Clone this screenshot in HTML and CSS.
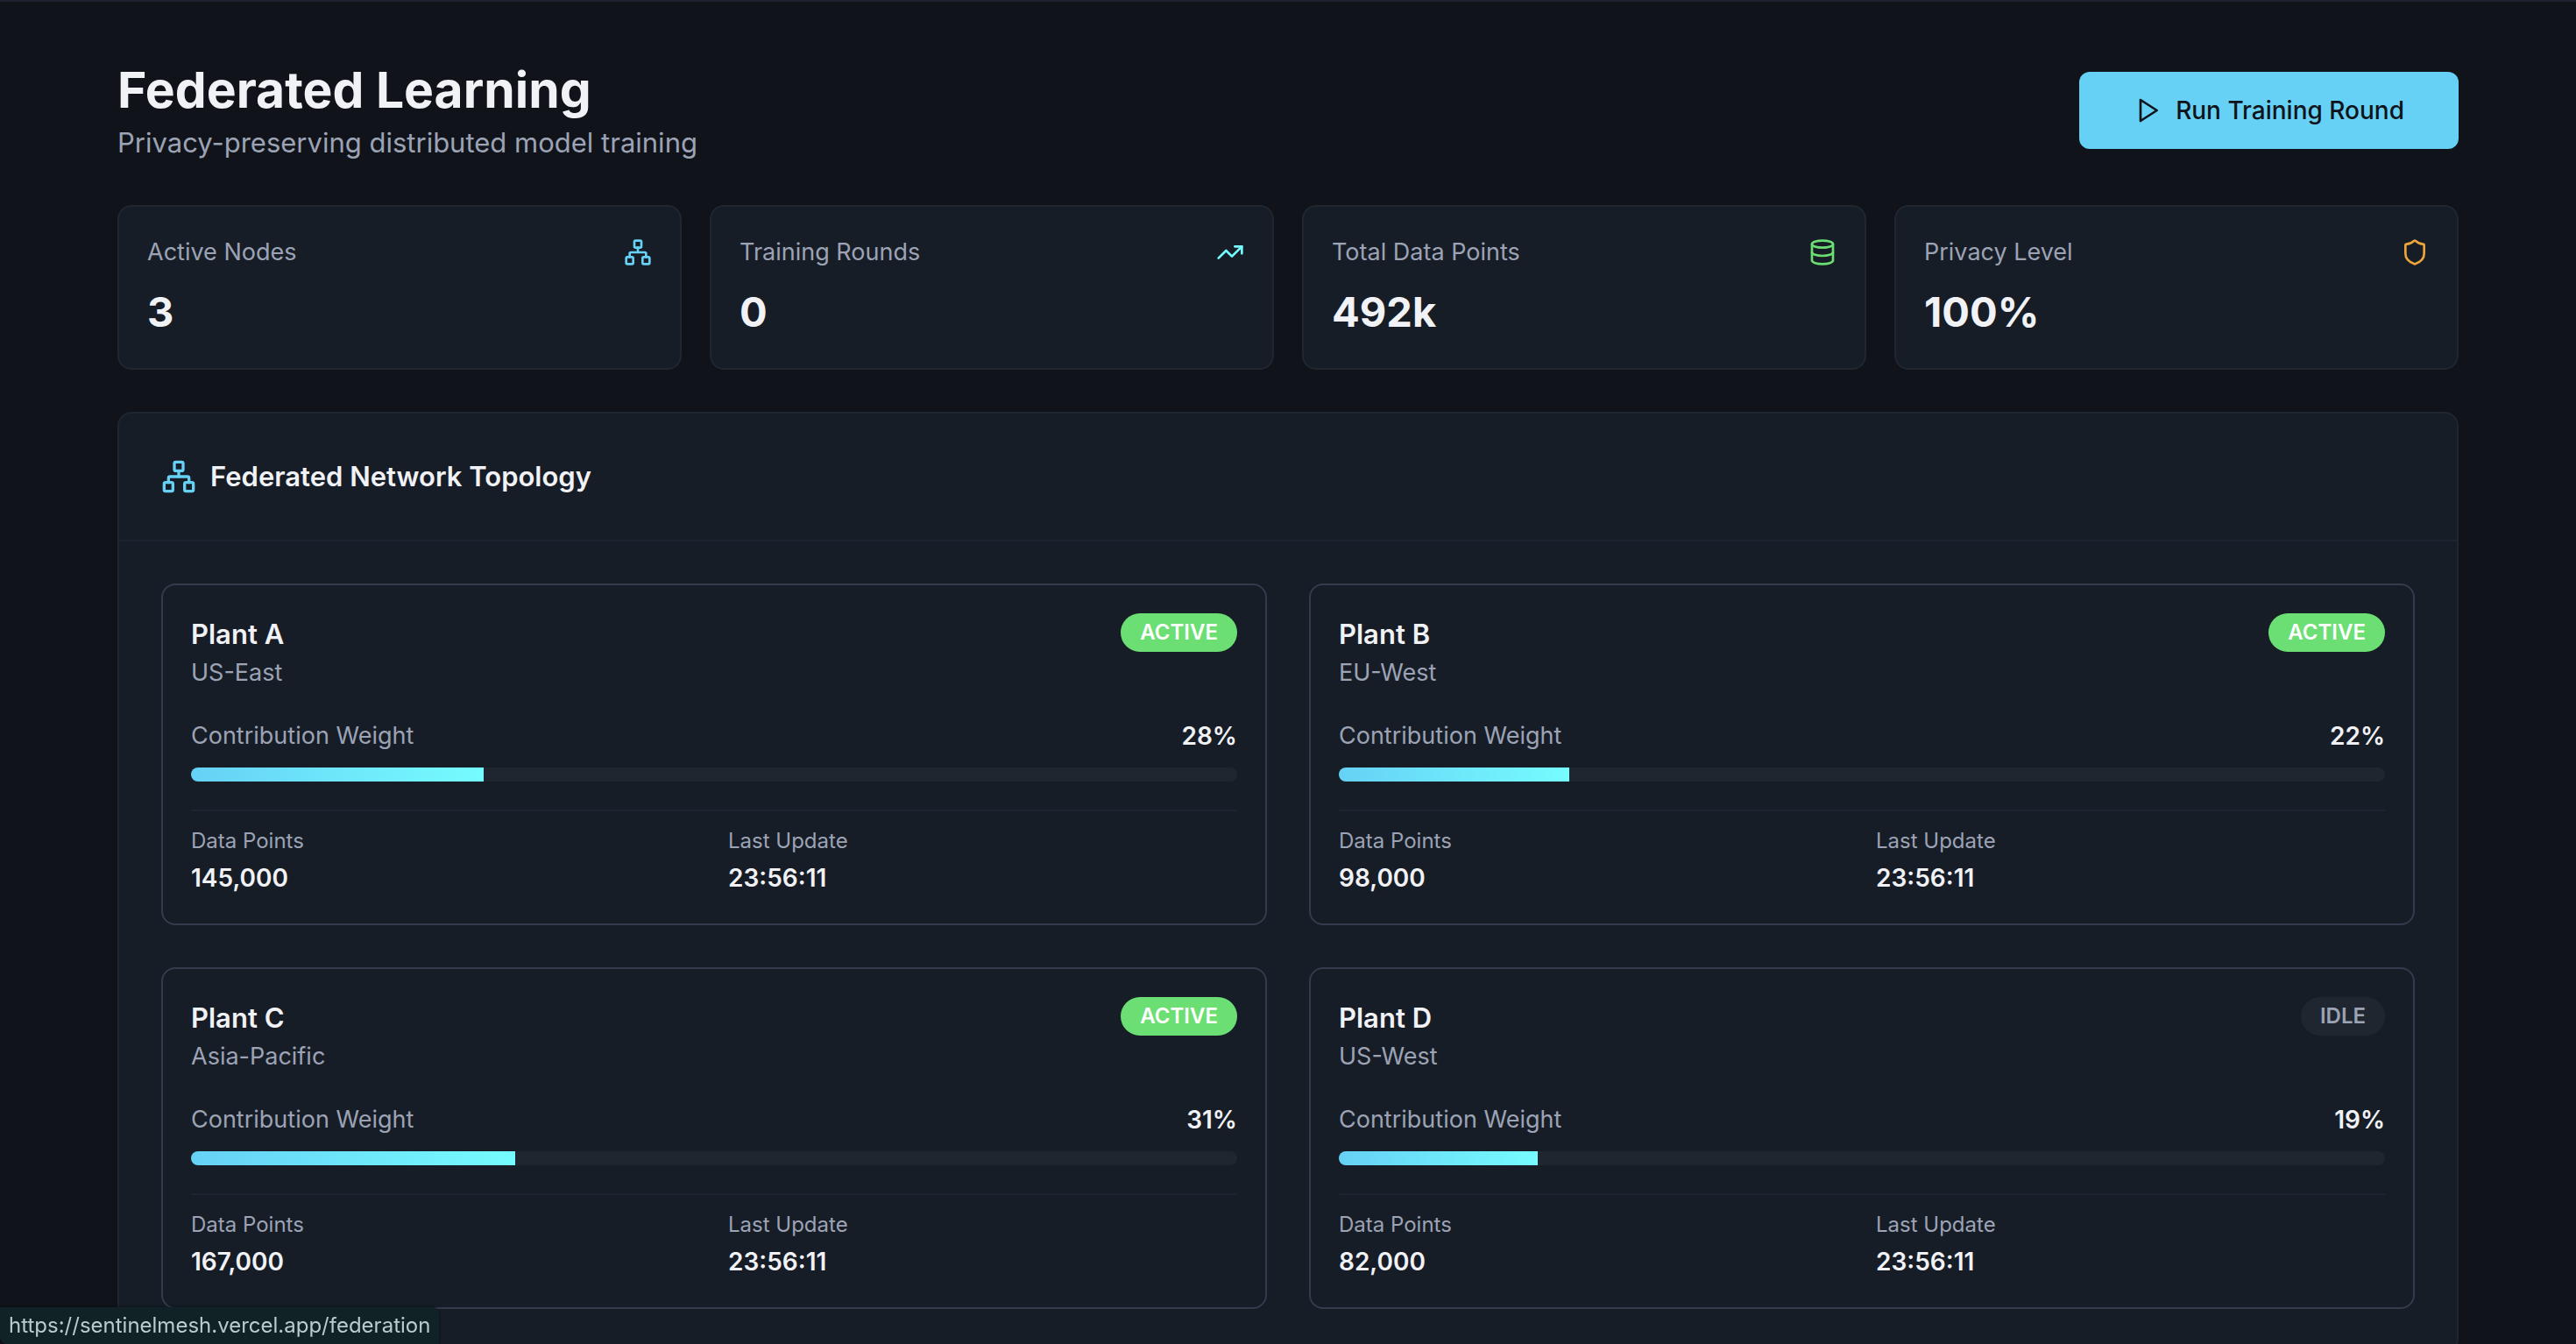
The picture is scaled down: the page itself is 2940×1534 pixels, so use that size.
FILE: index.html
```html
<!DOCTYPE html>
<html lang="en">
<head>
  <meta charset="UTF-8" />
  <meta name="viewport" content="width=device-width, initial-scale=1.0"/>
  <title>Federated Learning - SentinelMesh</title>
  <link rel="stylesheet" href="styles.css">
</head>
<body>

  <svg class="sprite" aria-hidden="true">
    <symbol id="network" viewBox="0 0 24 24">
      <rect x="16" y="16" width="6" height="6" rx="1"/>
      <rect x="2" y="16" width="6" height="6" rx="1"/>
      <rect x="9" y="2" width="6" height="6" rx="1"/>
      <path d="M5 16v-3a1 1 0 0 1 1-1h12a1 1 0 0 1 1 1v3"/>
      <path d="M12 12V8"/>
    </symbol>
  </svg>

  <main class="container">
    <header class="page-header">
      <div>
        <h1>Federated Learning</h1>
        <p class="subtitle">Privacy-preserving distributed model training</p>
      </div>
      <button type="button" class="run-btn">
        <svg class="icon" viewBox="0 0 24 24"><polygon points="6 3 20 12 6 21 6 3"/></svg>
        Run Training Round
      </button>
    </header>

    <section class="stats">
      <div class="card stat">
        <div class="stat-head">
          <span>Active Nodes</span>
          <svg class="icon blue"><use href="#network"/></svg>
        </div>
        <div class="stat-value">3</div>
      </div>
      <div class="card stat">
        <div class="stat-head">
          <span>Training Rounds</span>
          <svg class="icon cyan" viewBox="0 0 24 24"><polyline points="22 7 13.5 15.5 8.5 10.5 2 17"/><polyline points="16 7 22 7 22 13"/></svg>
        </div>
        <div class="stat-value">0</div>
      </div>
      <div class="card stat">
        <div class="stat-head">
          <span>Total Data Points</span>
          <svg class="icon green" viewBox="0 0 24 24"><ellipse cx="12" cy="5" rx="9" ry="3"/><path d="M3 5v14a9 3 0 0 0 18 0V5"/><path d="M3 12a9 3 0 0 0 18 0"/></svg>
        </div>
        <div class="stat-value">492k</div>
      </div>
      <div class="card stat">
        <div class="stat-head">
          <span>Privacy Level</span>
          <svg class="icon orange" viewBox="0 0 24 24"><path d="M20 13c0 5-3.500 7.500-7.660 8.950a1 1 0 0 1-.67-.01C7.500 20.500 4 18 4 13V6a1 1 0 0 1 1-1c2 0 4.500-1.200 6.240-2.720a1.170 1.170 0 0 1 1.520 0C14.510 3.810 17 5 19 5a1 1 0 0 1 1 1z"/></svg>
        </div>
        <div class="stat-value">100%</div>
      </div>
    </section>

    <section class="card panel">
      <div class="panel-head">
        <svg class="icon icon-lg blue"><use href="#network"/></svg>
        <h2>Federated Network Topology</h2>
      </div>

      <div class="nodes">
        <article class="node">
          <div class="node-head">
            <div>
              <h3>Plant A</h3>
              <p class="region">US-East</p>
            </div>
            <span class="badge active">ACTIVE</span>
          </div>
          <div class="weight"><span>Contribution Weight</span><strong>28%</strong></div>
          <div class="track"><div class="fill" style="width: 28%"></div></div>
          <dl class="details">
            <div><dt>Data Points</dt><dd>145,000</dd></div>
            <div><dt>Last Update</dt><dd>23:56:11</dd></div>
          </dl>
        </article>

        <article class="node">
          <div class="node-head">
            <div>
              <h3>Plant B</h3>
              <p class="region">EU-West</p>
            </div>
            <span class="badge active">ACTIVE</span>
          </div>
          <div class="weight"><span>Contribution Weight</span><strong>22%</strong></div>
          <div class="track"><div class="fill" style="width: 22%"></div></div>
          <dl class="details">
            <div><dt>Data Points</dt><dd>98,000</dd></div>
            <div><dt>Last Update</dt><dd>23:56:11</dd></div>
          </dl>
        </article>

        <article class="node">
          <div class="node-head">
            <div>
              <h3>Plant C</h3>
              <p class="region">Asia-Pacific</p>
            </div>
            <span class="badge active">ACTIVE</span>
          </div>
          <div class="weight"><span>Contribution Weight</span><strong>31%</strong></div>
          <div class="track"><div class="fill" style="width: 31%"></div></div>
          <dl class="details">
            <div><dt>Data Points</dt><dd>167,000</dd></div>
            <div><dt>Last Update</dt><dd>23:56:11</dd></div>
          </dl>
        </article>

        <article class="node">
          <div class="node-head">
            <div>
              <h3>Plant D</h3>
              <p class="region">US-West</p>
            </div>
            <span class="badge idle">IDLE</span>
          </div>
          <div class="weight"><span>Contribution Weight</span><strong>19%</strong></div>
          <div class="track"><div class="fill" style="width: 19%"></div></div>
          <dl class="details">
            <div><dt>Data Points</dt><dd>82,000</dd></div>
            <div><dt>Last Update</dt><dd>23:56:11</dd></div>
          </dl>
        </article>
      </div>
    </section>
  </main>

  <div class="link-status">https://sentinelmesh.vercel.app/federation</div>

</body>
</html>
```

FILE: styles.css
```css
* {
  box-sizing: border-box;
  margin: 0;
  padding: 0;
}
body {
  font-family: Inter, "Liberation Sans", sans-serif;
  font-size: 28px;
  line-height: 40px;
  background: #10131a;
  color: #f1f2f6;
  border-top: 2px solid #1e2230;
}
.sprite {
  display: none;
}
.container {
  max-width: 2800px;
  margin: 0 auto;
  padding: 64px;
}
.page-header {
  display: flex;
  justify-content: space-between;
  align-items: center;
  margin-bottom: 48px;
}
h1 {
  font-size: 57px;
  line-height: 74px;
  font-weight: 700;
}
.subtitle {
  font-size: 31px;
  line-height: 46px;
  color: #9ca3b5;
}
.run-btn {
  display: flex;
  align-items: center;
  gap: 16px;
  padding: 24px 62px;
  border: none;
  border-radius: 12px;
  background: #66d1f5;
  color: #10131a;
  font: inherit;
  font-weight: 500;
  cursor: pointer;
}
.icon {
  width: 32px;
  height: 32px;
  flex-shrink: 0;
  fill: none;
  stroke: currentColor;
  stroke-width: 2;
  stroke-linecap: round;
  stroke-linejoin: round;
}
.icon-lg {
  width: 40px;
  height: 40px;
}
.blue { color: #66d1f5; }
.cyan { color: #75fcff; }
.green { color: #6bdf74; }
.orange { color: #eba53b; }

.card {
  background: #171d26;
  border: 2px solid #1f2630;
  border-radius: 16px;
}
.stats {
  display: grid;
  grid-template-columns: repeat(4, 1fr);
  gap: 32px;
  margin-bottom: 48px;
}
.stat {
  padding: 32px;
}
.stat-head {
  display: flex;
  justify-content: space-between;
  align-items: center;
  margin-bottom: 16px;
  font-size: 27px;
  color: #9ca3b5;
}
.stat-value {
  font-size: 47px;
  line-height: 64px;
  font-weight: 700;
}

.panel-head {
  display: flex;
  align-items: center;
  gap: 16px;
  padding: 48px;
  border-bottom: 2px solid #1e2430;
}
h2, h3 {
  font-size: 31px;
  line-height: 48px;
  font-weight: 600;
}
.nodes {
  display: grid;
  grid-template-columns: 1fr 1fr;
  gap: 48px;
  padding: 48px;
}
.node {
  padding: 32px;
  border: 2px solid #343b4d;
  border-radius: 16px;
}
.node-head {
  display: flex;
  justify-content: space-between;
  align-items: flex-start;
  margin-bottom: 32px;
}
.region {
  font-size: 27px;
  color: #9ca3b5;
}
.badge {
  padding: 4px 22px;
  border-radius: 22px;
  font-size: 24px;
  line-height: 36px;
  font-weight: 600;
}
.active {
  background: #6bdf74;
  color: #fff;
}
.idle {
  background: #1f262f;
  color: #9ca3b5;
}
.weight {
  display: flex;
  justify-content: space-between;
  margin-bottom: 16px;
  font-size: 27px;
  color: #9ca3b5;
}
.weight strong {
  color: #f1f2f6;
  font-size: 28px;
  font-weight: 600;
}
.track {
  height: 16px;
  border-radius: 8px;
  background: #1f262f;
  overflow: hidden;
}
.fill {
  height: 100%;
  background: linear-gradient(90deg, #66d1f5, #75fcff);
}
.details {
  display: grid;
  grid-template-columns: 1fr 1fr;
  gap: 32px;
  margin-top: 32px;
  padding-top: 16px;
  border-top: 2px solid #1e2430;
}
dt {
  margin-bottom: 4px;
  font-size: 24px;
  line-height: 36px;
  color: #9ca3b5;
}
dd {
  font-weight: 600;
}

/* link preview in the window corner */
.link-status {
  position: fixed;
  left: 0;
  bottom: 0;
  padding: 0 10px;
  border-radius: 0 8px 0 8px;
  background: #112226;
  color: #b9cccb;
  font-size: 24px;
  line-height: 42px;
  box-shadow: 0 0 4px rgba(0,0,0,0.5);
}
```
